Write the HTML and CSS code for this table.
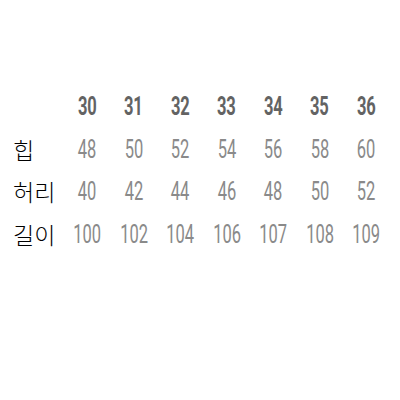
FILE: index.html
```html
<!DOCTYPE html>
<html lang="ko">
<head>
<meta charset="utf-8">
<link rel="stylesheet" href="styles.css">
</head>
<body>
<div class="size-table">
  <div class="cell"></div>
  <div class="cell num head"><span>30</span></div>
  <div class="cell num head"><span>31</span></div>
  <div class="cell num head"><span>32</span></div>
  <div class="cell num head"><span>33</span></div>
  <div class="cell num head"><span>34</span></div>
  <div class="cell num head"><span>35</span></div>
  <div class="cell num head"><span>36</span></div>

  <div class="cell label">힙</div>
  <div class="cell num"><span>48</span></div>
  <div class="cell num"><span>50</span></div>
  <div class="cell num"><span>52</span></div>
  <div class="cell num"><span>54</span></div>
  <div class="cell num"><span>56</span></div>
  <div class="cell num"><span>58</span></div>
  <div class="cell num"><span>60</span></div>

  <div class="cell label">허리</div>
  <div class="cell num"><span>40</span></div>
  <div class="cell num"><span>42</span></div>
  <div class="cell num"><span>44</span></div>
  <div class="cell num"><span>46</span></div>
  <div class="cell num"><span>48</span></div>
  <div class="cell num"><span>50</span></div>
  <div class="cell num"><span>52</span></div>

  <div class="cell label">길이</div>
  <div class="cell num"><span>100</span></div>
  <div class="cell num"><span>102</span></div>
  <div class="cell num"><span>104</span></div>
  <div class="cell num"><span>106</span></div>
  <div class="cell num"><span>107</span></div>
  <div class="cell num"><span>108</span></div>
  <div class="cell num"><span>109</span></div>
</div>
</body>
</html>
```

FILE: styles.css
```css
html, body {
  margin: 0;
  padding: 0;
  background: #ffffff;
}

body {
  width: 400px;
  height: 400px;
  overflow: hidden;
}

.size-table {
  display: grid;
  grid-template-columns: 51px repeat(7, 46.5px);
  grid-template-rows: 44px 42px 43px 43px;
  padding: 84px 0 0 13px;
}

.cell {
  display: flex;
  align-items: center;
  line-height: 1;
}

.label {
  font-family: "Noto Sans CJK KR", sans-serif;
  font-size: 23px;
  font-weight: 300;
  color: #000000;
  white-space: nowrap;
}

.num {
  justify-content: center;
  font-family: Roboto, "Liberation Sans", sans-serif;
  font-size: 25px;
  color: #8a8a8a;
}

.num span {
  display: inline-block;
  transform: scaleX(0.66);
  transform-origin: center;
}

.head {
  color: #636363;
  font-weight: 700;
}
```
